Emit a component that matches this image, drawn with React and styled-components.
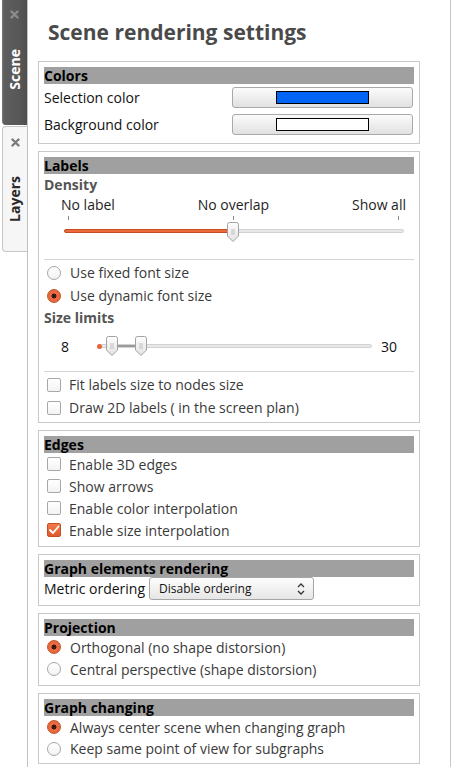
import React from 'react';
import styled, { createGlobalStyle } from 'styled-components';

const GlobalStyle = createGlobalStyle`
  html, body { margin: 0; padding: 0; background: #fff; }
  body { font-family: "Open Sans", "DejaVu Sans", sans-serif; color: #3c3c3c; }
`;

const Page = styled.div`
  display: flex;
  width: 451px;
  height: 767px;
  overflow: hidden;
  background: #fff;
`;

const TabStrip = styled.div`
  width: 28px;
  flex: none;
  box-sizing: border-box;
  border-right: 1px solid #c2c2c2;
  padding-left: 2px;
  display: flex;
  flex-direction: column;
  gap: 1px;
`;

const Tab = styled.div`
  height: ${p => (p.$active ? 125 : 126)}px;
  box-sizing: border-box;
  display: flex;
  flex-direction: column;
  align-items: center;
  padding-top: ${p => (p.$active ? 10 : 11)}px;
  background: ${p => (p.$active ? 'linear-gradient(to right, #7a7a7a 0, #5e5e5e 2px, #575757 70%, #4e4e4e 100%)' : '#f6f6f6')};
  border: ${p => (p.$active ? 'none' : '1px solid #c6c6c6')};
  border-right: none;
  border-radius: ${p => (p.$active ? '0 0 0 4px' : '4px 0 0 4px')};
  color: ${p => (p.$active ? '#fff' : '#2a2a2a')};
`;

const TabLabelArea = styled.div`
  flex: 1;
  display: flex;
  align-items: center;
  justify-content: center;
  padding-bottom: ${p => p.$pb ?? 4}px;
`;

const TabLabel = styled.span`
  writing-mode: vertical-rl;
  transform: rotate(180deg);
  font-weight: 700;
  font-size: 14px;
  line-height: 16px;
`;

const Panel = styled.div`
  flex: 1;
  box-sizing: border-box;
  border-right: 1px solid #c8c8c8;
  padding-left: 10px;
  display: flex;
  flex-direction: column;
`;

const Title = styled.h1`
  margin: 0 0 15px 0;
  padding: 18px 0 0 10px;
  font-size: 21px;
  line-height: 28px;
  font-weight: 700;
  color: #4a4a4a;
`;

const Groups = styled.div`
  display: flex;
  flex-direction: column;
  gap: 7px;
`;

const GroupBox = styled.section`
  width: 382px;
  box-sizing: border-box;
  border: 1px solid #c9c9c9;
  padding: 5px 5px ${p => p.$pb ?? 5}px 5px;
`;

const GroupHeader = styled.div`
  height: 17px;
  line-height: 17px;
  background: #a0a0a0;
  font-weight: 700;
  font-size: 14px;
  color: #000;
  white-space: nowrap;
`;

const Row = styled.div`
  display: flex;
  align-items: center;
  height: ${p => p.$h ?? 22}px;
  font-size: 14px;
  color: #3a3a3a;
  white-space: nowrap;
`;

const ColorRow = styled(Row)`
  justify-content: space-between;
  color: #111;
`;

const ColorButton = styled.div`
  width: 181px;
  height: 21px;
  box-sizing: border-box;
  margin-right: 1px;
  border: 1px solid #a9a9a9;
  border-radius: 3px;
  background: linear-gradient(#fbfbfb, #e1e1e1);
  display: flex;
  align-items: center;
  justify-content: center;
`;

const Swatch = styled.div`
  width: 93px;
  height: 13px;
  box-sizing: border-box;
  border: 1px solid #000;
  background: ${p => p.$color};
`;

const SubTitle = styled.div`
  height: ${p => p.$h ?? 22}px;
  line-height: ${p => p.$h ?? 22}px;
  font-weight: 700;
  font-size: 14px;
  color: #555;
`;

const TickLabels = styled.div`
  display: flex;
  justify-content: space-between;
  padding: 0 8px 0 17px;
  height: 20px;
  line-height: 20px;
  font-size: 14px;
  color: #1e1e1e;
`;

const SliderTrack = styled.div`
  position: relative;
  margin: 0 10px 0 20px;
  height: 27px;
`;

const Tick = styled.div`
  position: absolute;
  top: 1px;
  width: 1px;
  height: 4px;
  background: #8a8a8a;
`;

const Groove = styled.div`
  position: absolute;
  top: ${p => p.$top}px;
  left: 0;
  right: 0;
  height: 4px;
  box-sizing: border-box;
  border: 1px solid #d2d2d2;
  border-radius: 2px;
  background: #e8e8e8;
`;

const GrooveFill = styled.div`
  position: absolute;
  top: ${p => p.$top}px;
  left: 0;
  height: 4px;
  box-sizing: border-box;
  border: 1px solid #c64b22;
  border-radius: 2px;
  background: #ea6a3a;
`;

const HandleWrap = styled.div`
  position: absolute;
  top: ${p => p.$top}px;
  width: 12px;
  height: 20px;
  display: flex;
`;

const Separator = styled.div`
  height: 1px;
  background: #d4d4d4;
  margin-top: ${p => p.$mt}px;
  margin-bottom: ${p => p.$mb ?? 1}px;
`;

const RadioDot = styled.span`
  width: 14px;
  height: 14px;
  box-sizing: border-box;
  margin: 0 9px 0 3px;
  border-radius: 50%;
  border: 1px solid ${p => (p.$checked ? '#c4552e' : '#a6a6a6')};
  background: ${p => (p.$checked ? 'radial-gradient(circle, #3a1a10 0 2.2px, #ee7045 2.8px, #e05c30 100%)' : 'linear-gradient(#fff, #f2f2f2)')};
  flex: none;
`;

const CheckBoxBox = styled.span`
  width: 14px;
  height: 14px;
  box-sizing: border-box;
  margin: 0 8px 0 3px;
  border-radius: 2px;
  border: 1px solid ${p => (p.$checked ? '#c44f25' : '#a8a8a8')};
  background: ${p => (p.$checked ? 'linear-gradient(#f27a4c, #df592c)' : 'linear-gradient(#fff, #f3f3f3)')};
  display: flex;
  align-items: center;
  justify-content: center;
  flex: none;
`;

const RangeRow = styled(Row)`
  padding-left: 17px;
  margin-top: 6px;
  color: #111;
`;

const RangeValue = styled.span`
  width: ${p => p.$w}px;
  flex: none;
`;

const RangeTrack = styled.div`
  position: relative;
  width: 275px;
  height: 22px;
  margin: 0 9px 0 28px;
  flex: none;
`;

const RangeSpan = styled.div`
  position: absolute;
  top: 10px;
  height: 2px;
  background: #9a9a9a;
`;

const RangeDot = styled.div`
  position: absolute;
  top: 9px;
  left: 0;
  width: 5px;
  height: 5px;
  border-radius: 50%;
  background: #e8643a;
`;

const MetricRow = styled(Row)`
  color: #111;
`;

const SelectBox = styled.div`
  width: 165px;
  height: 23px;
  box-sizing: border-box;
  margin-left: 4px;
  padding: 0 8px 0 9px;
  border: 1px solid #a6a6a6;
  border-radius: 3px;
  background: linear-gradient(#fdfdfd, #e6e6e6);
  display: flex;
  align-items: center;
  justify-content: space-between;
  font-size: 12px;
  color: #111;
`;

const CloseIcon = ({ color }) => (
  <svg width="9" height="9" viewBox="0 0 9 9">
    <path d="M1.5 1.5 L7.5 7.5 M7.5 1.5 L1.5 7.5" stroke={color} strokeWidth="2.4" strokeLinecap="round" />
  </svg>
);

const Handle = () => (
  <svg width="12" height="20" viewBox="0 0 12 20">
    <defs>
      <linearGradient id="hg" x1="0" y1="0" x2="0" y2="1">
        <stop offset="0" stopColor="#fdfdfd" />
        <stop offset="1" stopColor="#e2e2e2" />
      </linearGradient>
    </defs>
    <path d="M2.5 0.5 H9.5 Q11.5 0.5 11.5 2.5 V14 L6 19.5 L0.5 14 V2.5 Q0.5 0.5 2.5 0.5 Z" fill="url(#hg)" stroke="#a2a2a2" />
    <path d="M4 8 H8 M4 10 H8 M4 12 H8" stroke="#b4b4b4" strokeWidth="0.8" />
  </svg>
);

const CheckMark = () => (
  <svg width="12" height="12" viewBox="0 0 12 12">
    <path d="M2 6 L5 9 L10.5 2.5" stroke="#fff" strokeWidth="1.8" fill="none" strokeLinecap="round" strokeLinejoin="round" />
  </svg>
);

const UpDown = () => (
  <svg width="8" height="14" viewBox="0 0 8 14">
    <path d="M1 5 L4 2 L7 5 M1 9 L4 12 L7 9" stroke="#333" strokeWidth="1.3" fill="none" />
  </svg>
);

const Radio = ({ checked, children, h }) => (
  <Row $h={h}>
    <RadioDot $checked={checked} />
    {children}
  </Row>
);

const Check = ({ checked, children, h }) => (
  <Row $h={h}>
    <CheckBoxBox $checked={checked}>{checked && <CheckMark />}</CheckBoxBox>
    {children}
  </Row>
);

const densityTicks = [4, 169, 334];

const App = () => (
  <Page>
    <GlobalStyle />
    <TabStrip>
      <Tab $active>
        <CloseIcon color="#8c8c8c" />
        <TabLabelArea $pb={6}><TabLabel>Scene</TabLabel></TabLabelArea>
      </Tab>
      <Tab>
        <CloseIcon color="#7a7a7a" />
        <TabLabelArea $pb={0}><TabLabel>Layers</TabLabel></TabLabelArea>
      </Tab>
    </TabStrip>

    <Panel>
      <Title>Scene rendering settings</Title>
      <Groups>
        <GroupBox>
          <GroupHeader>Colors</GroupHeader>
          <ColorRow $h={27}>
            Selection color
            <ColorButton><Swatch $color="#0064f5" /></ColorButton>
          </ColorRow>
          <ColorRow $h={27}>
            Background color
            <ColorButton><Swatch $color="#fff" /></ColorButton>
          </ColorRow>
        </GroupBox>

        <GroupBox $pb={3}>
          <GroupHeader>Labels</GroupHeader>
          <SubTitle $h={21}>Density</SubTitle>
          <TickLabels>
            <span>No label</span>
            <span>No overlap</span>
            <span>Show all</span>
          </TickLabels>
          <SliderTrack>
            {densityTicks.map(x => <Tick key={x} style={{ left: x }} />)}
            <Groove $top={14} />
            <GrooveFill $top={14} style={{ width: 170 }} />
            <HandleWrap $top={7} style={{ left: 163 }}><Handle /></HandleWrap>
          </SliderTrack>
          <Separator $mt={17} />
          <Radio h={23}>Use fixed font size</Radio>
          <Radio h={23} checked>Use dynamic font size</Radio>
          <SubTitle>Size limits</SubTitle>
          <RangeRow>
            <RangeValue $w={8}>8</RangeValue>
            <RangeTrack>
              <Groove $top={9} />
              <RangeSpan style={{ left: 15, width: 29 }} />
              <RangeDot />
              <HandleWrap $top={1} style={{ left: 9 }}><Handle /></HandleWrap>
              <HandleWrap $top={1} style={{ left: 38 }}><Handle /></HandleWrap>
            </RangeTrack>
            <RangeValue $w={18}>30</RangeValue>
          </RangeRow>
          <Separator $mt={14} />
          <Check h={23}>Fit labels size to nodes size</Check>
          <Check h={23}>Draw 2D labels ( in the screen plan)</Check>
        </GroupBox>

        <GroupBox>
          <GroupHeader>Edges</GroupHeader>
          <Check>Enable 3D edges</Check>
          <Check>Show arrows</Check>
          <Check>Enable color interpolation</Check>
          <Check checked>Enable size interpolation</Check>
        </GroupBox>

        <GroupBox>
          <GroupHeader>Graph elements rendering</GroupHeader>
          <MetricRow $h={23}>
            Metric ordering
            <SelectBox>
              Disable ordering
              <UpDown />
            </SelectBox>
          </MetricRow>
        </GroupBox>

        <GroupBox>
          <GroupHeader>Projection</GroupHeader>
          <Radio checked>Orthogonal (no shape distorsion)</Radio>
          <Radio>Central perspective (shape distorsion)</Radio>
        </GroupBox>

        <GroupBox $pb={4}>
          <GroupHeader>Graph changing</GroupHeader>
          <Radio checked>Always center scene when changing graph</Radio>
          <Radio h={21}>Keep same point of view for subgraphs</Radio>
        </GroupBox>
      </Groups>
    </Panel>
  </Page>
);

export default App;
